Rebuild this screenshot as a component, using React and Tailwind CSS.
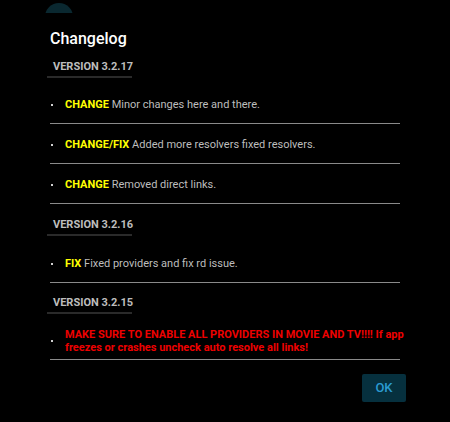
export default function App() {
  const font = { fontFamily: "Roboto, 'Noto Sans', sans-serif" };
  const Version = ({ v, mt }) => (
    <div className={mt + " ml-[-3px] w-[85px] pl-[6px] pb-[1px] border-b-2 border-[#2a2a2a]"}>
      <div className="text-[11px] leading-[16px] font-bold text-[#bdbdbd] whitespace-nowrap">{v}</div>
    </div>
  );
  const Bullet = () => (
    <span className="w-[15px] shrink-0 flex items-center pl-[1px]">
      <span className="block w-[2px] h-[2px] bg-[#cfcfcf]"></span>
    </span>
  );
  const Item = ({ tag, children }) => (
    <li className="flex items-center h-[40px] pt-[2px] border-b border-[#8a8a8a]">
      <Bullet />
      <span className="text-[11px] leading-[13px] text-[#bdbdbd]">
        <span className="font-bold text-[#ffff00]">{tag}</span> {children}
      </span>
    </li>
  );
  return (
    <div className="w-[450px] h-[422px] bg-black overflow-hidden" style={font}>
      <div className="h-[13px] overflow-hidden">
        <div className="ml-[45px] mt-[3px] w-[28px] h-[28px] rounded-full bg-[#0a2830]"></div>
      </div>
      <div className="pl-[50px] w-[400px]">
        <div className="mt-[14px] text-[16px] leading-[24px] font-medium text-white">Changelog</div>
        <Version v="VERSION 3.2.17" mt="mt-[8px]" />
        <ul className="mt-[6px]">
          <Item tag="CHANGE">Minor changes here and there.</Item>
          <Item tag="CHANGE/FIX">Added more resolvers fixed resolvers.</Item>
          <Item tag="CHANGE">Removed direct links.</Item>
        </ul>
        <Version v="VERSION 3.2.16" mt="mt-[13px]" />
        <ul className="mt-[7px]">
          <Item tag="FIX">Fixed providers and fix rd issue.</Item>
        </ul>
        <Version v="VERSION 3.2.15" mt="mt-[12px]" />
        <ul className="mt-[6px]">
          <li className="flex items-center h-[40px] pt-[2px] border-b border-[#8a8a8a]">
            <Bullet />
            <span className="text-[11px] leading-[13px] font-bold text-[#ee0000] mr-[-10px]">
              MAKE SURE TO ENABLE ALL PROVIDERS IN MOVIE AND TV!!!! If app freezes or crashes uncheck auto resolve all links!
            </span>
          </li>
        </ul>
      </div>
      <div className="flex justify-end pr-[44px] mt-[14px]">
        <button className="w-[44px] h-[28px] rounded-[2px] bg-[#06303e] text-[#2a9ad0] text-[13px] font-medium">OK</button>
      </div>
    </div>
  );
}
